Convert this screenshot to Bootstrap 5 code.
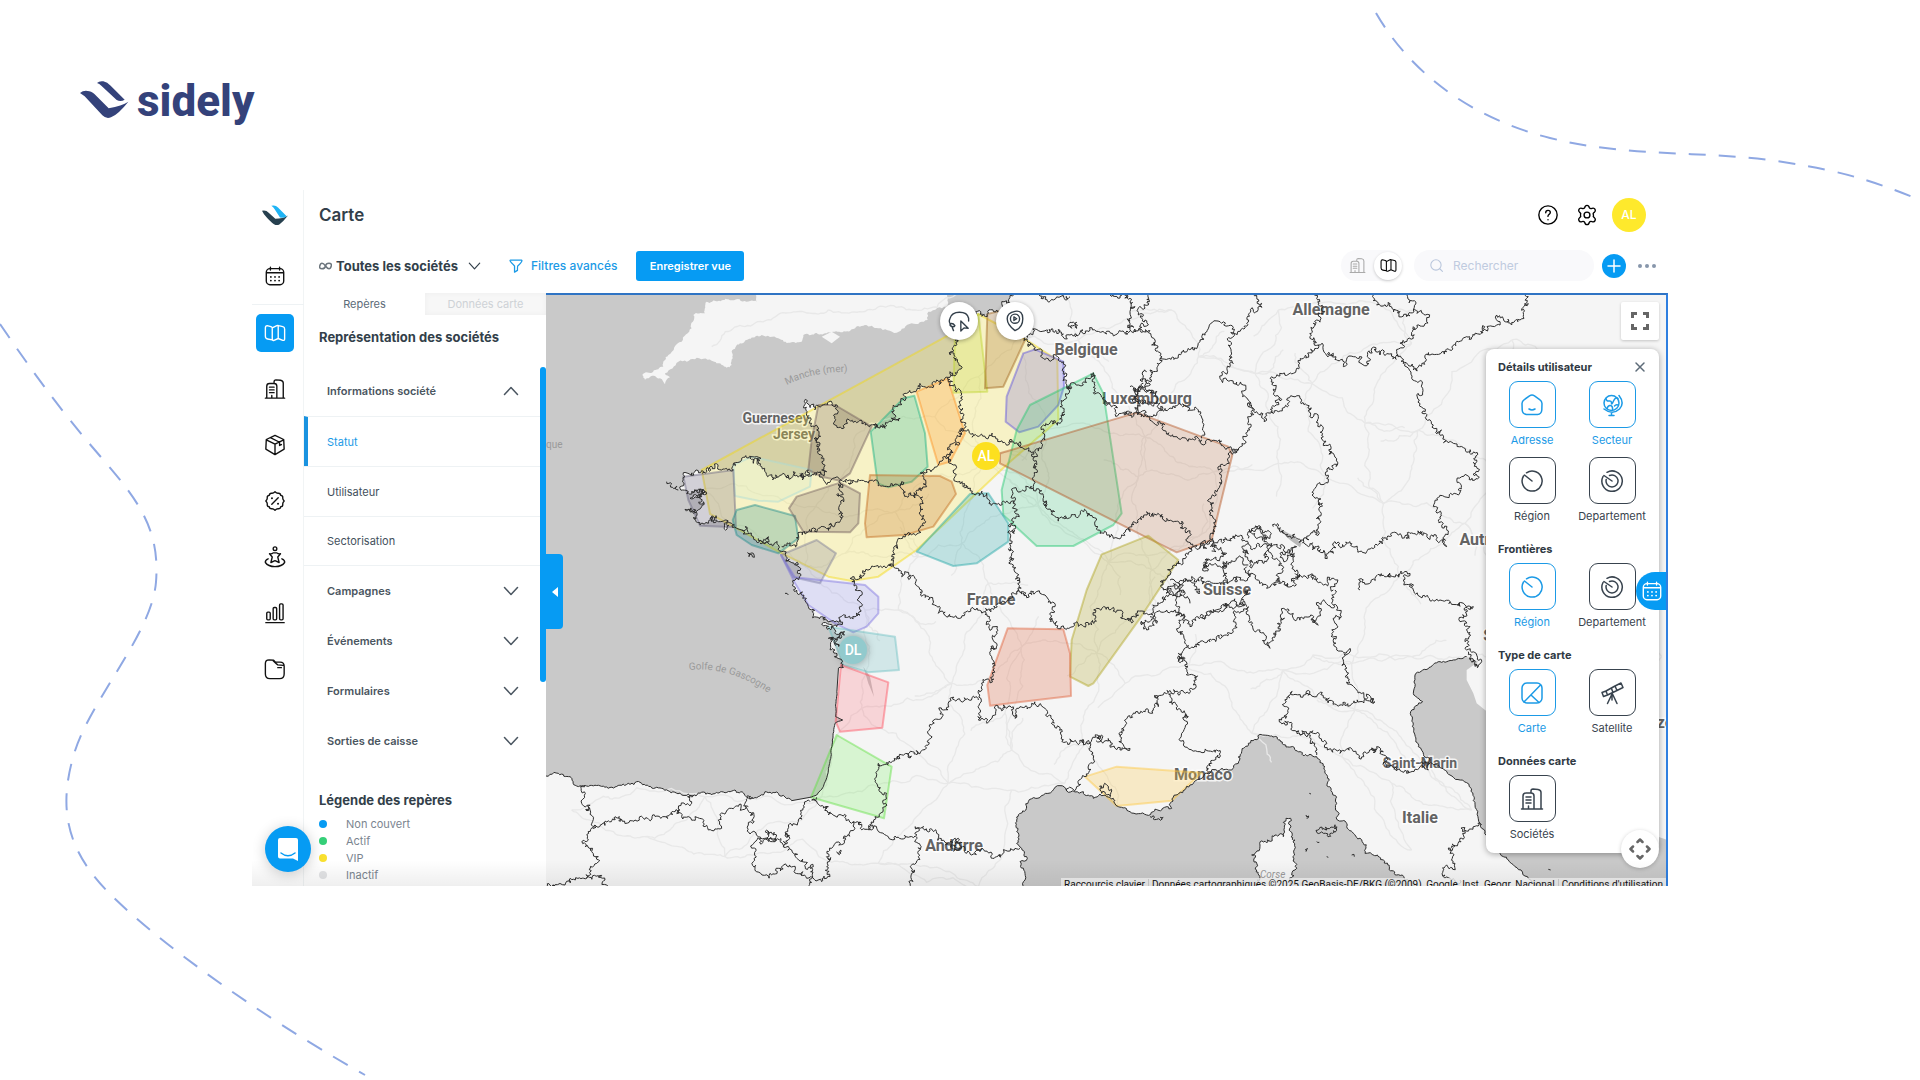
<!DOCTYPE html>
<html lang="fr">
<head>
<meta charset="utf-8">
<meta name="viewport" content="width=device-width, initial-scale=1">
<title>Sidely – Carte</title>
<link rel="stylesheet" href="https://cdn.jsdelivr.net/npm/bootstrap@5.3.0/dist/css/bootstrap.min.css">
<style>
:root{--blue:#069bf3;--ink:#333f4a;--line:#eef2f4}
body{font-family:Inter,"Liberation Sans",sans-serif;color:var(--ink);background:#fff;font-size:12px;line-height:16px;overflow-x:hidden}
svg.ico{fill:none;stroke:currentColor;stroke-width:1.5;stroke-linecap:round;stroke-linejoin:round;flex:none;display:block}
.deco{position:absolute;inset:0;width:100%;height:100%;z-index:-1;fill:none;stroke:#8fa8e3;stroke-width:2;stroke-dasharray:17 13}
.brand{padding:75px 80px 0;height:190px;color:#34427a;font-family:Roboto,"Liberation Sans",sans-serif;font-weight:800;font-size:44px;line-height:52px}
.brand svg{fill:#34427a;margin-top:4px}
.app{margin:0 252px;position:relative}
.rail{width:52px;padding-right:5px;border-right:1px solid #f1f4f5;color:#111}
.rail a{width:38px;height:38px;border-radius:5px;color:#111;margin-bottom:18px}
.rail a.on{background:var(--blue);color:#fff}
.rail a svg{width:22px;height:22px}
.rail .sep{height:1px;background:var(--line);width:52px;margin:-9px -5px 9px 0}
.rail .mark-s{height:50px;margin-bottom:17px}
.top-a{height:50px;padding:0 22px 0 15px}
.top-a h1{font-size:17px;line-height:24px;font-weight:600;margin:0}
.top-a .gap-x{gap:17px}
.avatar{width:34px;height:34px;border-radius:50%;background:#fee92c;color:#fff;font-weight:500;font-size:12px;margin-left:-3px}
.top-b{height:53px;padding:0 12px 2px 15px}
.pick{border:0;background:none;appearance:none;font-weight:700;font-size:13px;color:var(--ink);padding:0;width:148px}
.pick-arrow{margin-left:-16px;pointer-events:none}
.inf{stroke-width:3!important}
.btn-plain{border:0;background:none;padding:0;color:inherit}
.filt{color:#1b9ae6;font-weight:500;font-size:12px}
.save{background:var(--blue);color:#fff;font-weight:600;font-size:11px;border-radius:3px;border:0;height:30px;width:108px;margin-left:19px}
.pill{background:#f9f9fb;border-radius:16px;height:31px}
.pill .off{color:#aaa}
.pill .sel{width:28px;height:28px;border-radius:50%;background:#fff;box-shadow:0 1px 3px #0003}
.find{width:180px;color:#b9c6dc}
.find input{border:0;background:none;outline:0;width:120px;font-size:12px;color:var(--ink)}
.find input::placeholder{color:#c0cbdf;opacity:1}
.plus{width:24px;height:24px;border-radius:50%;background:var(--blue);color:#fff}
.side{width:242px;position:relative;z-index:2}
.tabs button{border:0;background:#fff;height:22px;flex:1;font-size:11px;color:#5c6b78}
.tabs button+button{background:#f7f7f7;color:#ced2d6;box-shadow:inset 0 0 6px #0000000a}
.side h2{font-size:13px;line-height:16px;font-weight:700;margin:0 0 0 15px}
.side .h-top{margin-top:14px;margin-bottom:21px}
.acc button{border:0;background:none;display:flex;width:100%;height:50px;align-items:center;justify-content:space-between;padding:0 27px 0 23px;font-size:11px;font-weight:600;color:#4a5560;text-align:left}
.acc .sub{border-top:1px solid var(--line);font-weight:400;color:#43505c}
.acc .last-sub{border-bottom:1px solid var(--line)}
.acc .cur{color:#1b9ae6;border-left:4px solid #1a93e0;padding-left:19px}
.scroller{position:absolute;right:0;top:74px;width:6px;height:315px;border-radius:3px;background:var(--blue)}
.legend{list-style:none;margin:7px 0 0;padding:0 0 3px 15px;color:#7b8590;font-size:11px}
.legend li{display:flex;align-items:center;height:17px;gap:19px}
.legend i{width:8px;height:8px;border-radius:50%}
.side .h-leg{margin-top:26px}
.map-box{position:relative;overflow:hidden;border-top:2px solid #2f74c4;border-right:2px solid #2f7fe0;background:#c9c9c9}
.map-box>svg{position:absolute;inset:0;width:100%;height:100%}
.map-box text{font-family:Roboto,"Liberation Sans",sans-serif}
.land{fill:#f5f5f5}
.road{fill:none;stroke:#e8e8e8;stroke-width:4}
.bord{fill:none;stroke:#2c2c2c;stroke-width:3;stroke-linejoin:round}
.zones polygon{stroke-width:6;stroke-linejoin:round;stroke-opacity:.45;fill-opacity:.25}
.lab{font-weight:700;font-size:16px;fill:#636363;stroke:#fff;stroke-opacity:.8;stroke-width:3px;paint-order:stroke;text-anchor:middle}
.lab.s14{font-size:14px}
.wat{font-size:10px;fill:#9a9a9a}
.over{position:absolute;border:0;padding:0;background:#fff;display:flex;align-items:center;justify-content:center;color:#333f4a}
.round{width:38px;height:38px;border-radius:50%;top:7px;box-shadow:0 1px 4px #0005}
.lasso{left:394px}.pin{left:450px}
.full{right:7px;top:7px;width:38px;height:38px;border-radius:2px;box-shadow:0 1px 3px #0003;color:#666}
.full svg{stroke-width:3!important;stroke-linecap:butt!important;stroke-linejoin:miter!important}
.pan{right:7px;bottom:18px;width:38px;height:38px;border-radius:50%;box-shadow:0 1px 4px #0003;color:#666;z-index:3}
.pan svg{stroke-width:2.5!important}
.cal{right:-2px;top:277px;width:32px;height:38px;border-radius:19px 0 0 19px;background:var(--blue);color:#fff;z-index:3}
.fold{left:0;top:259px;width:17px;height:75px;border-radius:0 4px 4px 0;background:var(--blue);color:#fff}
.panel{position:absolute;right:7px;top:54px;width:173px;background:#fff;border-radius:8px;box-shadow:0 1px 6px #0005;padding:11px 12px 12px}
.panel h3{font-size:11px;line-height:14px;font-weight:700;margin:0 0 7px;color:#2f3943}
.panel .tiles{display:grid;grid-template-columns:80px 80px;margin-left:-8px;margin-bottom:19px;row-gap:10px}
.panel .tiles.end{margin-bottom:0}
.tile{border:0;background:none;padding:0;color:#38434e;font-size:11px;line-height:14px;display:flex;flex-direction:column;align-items:center;gap:5px;width:80px;margin-left:2px}
.tile span{width:47px;height:47px;border:1px solid currentColor;border-radius:9px;display:flex;align-items:center;justify-content:center}
.tile.on{color:#1b9ae6}
.closer{position:absolute;right:13px;top:12px;color:#5d6b78}
.attr{position:absolute;right:0;bottom:-6px;background:#f5f5f5cc;font:10px/14px Roboto,"Liberation Sans",sans-serif;color:#111;white-space:nowrap;z-index:2}
.attr a{color:#111;text-decoration:none;padding:0 3px}
.attr a+a{border-left:1px solid #ccc}
.chat{position:absolute;left:13px;bottom:14px;width:46px;height:46px;border-radius:50%;border:0;background:var(--blue);box-shadow:0 2px 14px #0003;z-index:5;padding:0}
.shade{position:absolute;left:0;right:0;bottom:0;height:26px;background:linear-gradient(#0000,#00000010);pointer-events:none;z-index:4}
</style>
<script src="https://cdn.jsdelivr.net/npm/bootstrap@5.3.0/dist/js/bootstrap.bundle.min.js"></script>
</head>
<body class="position-relative min-vh-100">

<svg width="0" height="0" class="position-absolute" aria-hidden="true">
  <symbol id="calendar" viewBox="0 0 24 24"><rect x="2.500" y="4" width="19" height="17.500" rx="4"/><path d="M3 8.500h18M7 2.500v3M17 2.500v3"/><path stroke-width="2" d="M7.500 13h0M12 13h0M16.500 13h0M7.500 17h0M12 17h0M16.500 17h0"/></symbol>
  <symbol id="map" viewBox="0 0 24 24"><path d="M1.500 6.500q0-2.500 2-2.500l4 1 1.500 1v13.500l-5-1q-2.500-.5-2.500-3zM9 6.500l5-2.500q1-.5 2 0l4.500 1q2 .5 2 2.500v11q0 2-2 1.500L15.500 18 11 20q-1 .4-2-.5M15.500 4v14"/></symbol>
  <symbol id="building" viewBox="0 0 24 24"><path d="M1.500 22h21M3 22V9q0-3 3-3h5q3 0 3 3v13M11 6V4q0-2 2-2l5 .5q3 .5 3 3V22M6 10h5M6 13h5M6 16h5M8.500 22v-3"/></symbol>
  <symbol id="box" viewBox="0 0 24 24"><path d="M12 1.500 21.500 6 22 16.500 12 22.500 2 16.500 2.500 6zM2.500 6.500 12 11l9.500-4.500M12 11v11M7 4l10 5v3.500l2-1"/></symbol>
  <symbol id="percent" viewBox="0 0 24 24"><path d="M12 2q2 2 4 1.500 2 0 2.300 2.300Q20.500 6 20.500 8 20 10 22 12q-2 2-1.500 4 0 2-2.200 2.200Q18 20.500 16 20.500q-2-.5-4 1.500-2-2-4-1.500-2 0-2.300-2.300Q3.500 18 3.500 16 4 14 2 12q2-2 1.500-4 0-2 2.200-2.200Q6 3.500 8 3.500 10 4 12 2zM8.500 15.500l7-7"/><path stroke-width="2.200" d="M8.700 9h0M15.300 15h0"/></symbol>
  <symbol id="person" viewBox="0 0 24 24"><circle cx="12" cy="3" r="2"/><path d="M6 8.500q2.500.5 4-1h4q1.500 1.500 4 1M18 8.500 15 12l1.500 6-4.500-2-4.500 2L9 12 6 8.500M4.500 14Q1 15.500 1.500 18q3 4.500 10.500 4.500T22.500 18q.5-2.500-3-4"/></symbol>
  <symbol id="bars" viewBox="0 0 24 24"><path d="M2 22.500h20"/><rect x="3" y="11" width="3.800" height="8.500" rx="1.200"/><rect x="10" y="6" width="3.800" height="13.500" rx="1.200"/><rect x="17" y="2" width="3.800" height="17.500" rx="1.200"/></symbol>
  <symbol id="folder" viewBox="0 0 24 24"><path d="M1.500 6q0-4 4-4l5 .5 2 2h5q4.500 0 4.500 4.500v8.500q0 5-5 5H6.500q-5 0-5-5zM10 3q3 3 5 4.500l6 .5M15 10.500h4"/></symbol>
  <symbol id="down" viewBox="0 0 16 10"><path d="m1.500 1.500 6.500 7 6.500-7"/></symbol>
  <symbol id="up" viewBox="0 0 16 10"><path d="m1.500 8.500 6.500-7 6.500 7"/></symbol>
  <symbol id="dial" viewBox="0 0 24 24"><path d="M6.500 3.800A10 10 0 1 1 3.500 7M4.500 6l7.500 6"/></symbol>
  <symbol id="radar" viewBox="0 0 24 24"><path d="M7 3.300A10.200 10.200 0 1 1 3 7.500M9.500 6.500a6 6 0 1 1-3.300 4M4 6.500l8 5.500"/></symbol>
  <symbol id="home" viewBox="0 0 24 24"><path d="m9.500 2.800-5.500 4Q2.200 8 2 10.500L2.200 17q.3 4 4.300 4.500h11q4-.5 4.300-4.500l.2-6.500q-.2-2.500-2-3.700l-5.500-4q-2.500-1.600-5 0zM9 16q3 1.800 6 0"/></symbol>
  <symbol id="globe" viewBox="0 0 24 24"><circle cx="11.500" cy="10" r="7.500"/><path d="M19 2.500q6 7.500.5 13.500-7 6.500-15.500 0M11.500 20v2.500M9 22.500h5M6 5.500q.5 3 3 2.500t2.500 2 2-2 4.500-2.500M7 15.500q1-3.500 3.500-3t2 4.500M14.500 13q1.500-2 3.500-1"/></symbol>
  <symbol id="flat" viewBox="0 0 24 24"><rect x="2" y="2" width="20" height="20" rx="5"/><path d="M4 21 20.500 4M11 14l8 7.500"/></symbol>
  <symbol id="scope" viewBox="0 0 24 24"><path d="m2 11.500 4-1.500 1.500 4-4 1.500zM6 10l9-5 2 4.500-9.500 4.500M15 5l6-3 2 4.500-6 3M11.500 7.500l1.500 4M12 13l-4.500 9.500M12.500 13l4.500 9.500M12 13v6"/></symbol>
  <symbol id="gear" viewBox="0 0 24 24"><circle cx="12" cy="12" r="3.200"/><path d="M9.500 4Q10 1.500 12 1.500T14.500 4q1 1.500 3 .8 2.300-.8 3.300 1t-.9 3.400q-1.800 1-.8 2.800-.9 1.800.8 2.800 1.900 1.600.9 3.400t-3.300 1q-2-.7-3 .8Q14 22.500 12 22.500T9.500 20q-1-1.500-3-.8-2.300.8-3.300-1t.9-3.400q1.700-1 .8-2.800.9-1.800-.8-2.800-1.900-1.600-.9-3.400t3.300-1q2 .7 3-.8z"/></symbol>
</svg>

<svg class="deco" viewBox="0 0 1920 1080" preserveAspectRatio="xMidYMid slice" aria-hidden="true">
  <path d="M1376 13C1410 72 1470 118 1550 138S1700 150 1776 161 1880 184 1930 204"/>
  <path d="M0 324C30 368 60 410 100 456S160 530 156 582 90 700 74 754 66 850 110 894 250 1010 365 1075"/>
</svg>

<header class="brand d-flex">
  <svg width="49" height="40" viewBox="0 0 147 120" aria-hidden="true"><path d="M0 42q12-10 28-5 10 2 22 15l36 36q40-8 59-20-30 38-52 47-14 6-26-6L14 52zM51 12Q58 5 70 7q12 2 22 13l42 42q-12 8-24 1L64 20q-6-6-13-8z"/></svg>
  <span class="ms-2">sidely</span>
</header>

<main class="app d-flex">
  <nav class="rail d-flex flex-column align-items-center" aria-label="Navigation">
    <div class="mark-s d-flex align-items-center"><svg width="26" height="21" viewBox="0 0 78 62" aria-hidden="true"><path fill="#27404f" d="M0 17q12-3 20 6l20 18q22 0 38-10-14 18-26 27-8 4-16-1-12-8-30-30z"/><path fill="#1fb4f5" d="M28 2q12-4 20 5l26 26q-8 6-20 4L38 12q-4-6-10-10z"/></svg></div>
    <a href="#" class="d-flex align-items-center justify-content-center" aria-label="Agenda"><svg class="ico"><use href="#calendar"/></svg></a>
    <div class="sep"></div>
    <a href="#" class="on d-flex align-items-center justify-content-center" aria-label="Carte"><svg class="ico"><use href="#map"/></svg></a>
    <a href="#" class="d-flex align-items-center justify-content-center" aria-label="Sociétés"><svg class="ico"><use href="#building"/></svg></a>
    <a href="#" class="d-flex align-items-center justify-content-center" aria-label="Produits"><svg class="ico"><use href="#box"/></svg></a>
    <a href="#" class="d-flex align-items-center justify-content-center" aria-label="Promotions"><svg class="ico"><use href="#percent"/></svg></a>
    <a href="#" class="d-flex align-items-center justify-content-center" aria-label="Équipe"><svg class="ico"><use href="#person"/></svg></a>
    <a href="#" class="d-flex align-items-center justify-content-center" aria-label="Statistiques"><svg class="ico"><use href="#bars"/></svg></a>
    <a href="#" class="d-flex align-items-center justify-content-center" aria-label="Documents"><svg class="ico"><use href="#folder"/></svg></a>
  </nav>

  <div class="flex-grow-1 d-flex flex-column">
    <div class="top-a d-flex align-items-center justify-content-between">
      <h1>Carte</h1>
      <div class="gap-x d-flex align-items-center">
        <button class="btn-plain text-black" aria-label="Aide"><svg class="ico" width="22" height="22" viewBox="0 0 24 24"><circle cx="12" cy="12" r="10"/><path d="M9.500 9.500Q9.500 7 12 7t2.500 2.300q0 1.200-1.300 2T12 13.500M12 17v.3"/></svg></button>
        <button class="btn-plain text-black" aria-label="Paramètres"><svg class="ico" width="22" height="22"><use href="#gear"/></svg></button>
        <div class="avatar d-flex align-items-center justify-content-center">AL</div>
      </div>
    </div>
    <div class="top-b d-flex align-items-center justify-content-between">
      <div class="d-flex align-items-center">
        <svg class="ico inf me-1 text-secondary" width="13" height="8" viewBox="0 0 26 14"><path d="M13 7Q9 1.500 6 1.500T1.500 7 6 12.500 13 7t7-5.500T24.500 7 20 12.500 13 7z"/></svg>
        <select class="pick" aria-label="Vue"><option>Toutes les sociétés</option></select>
        <svg class="ico pick-arrow" width="13" height="8"><use href="#down"/></svg>
        <button class="btn-plain filt d-flex align-items-center ms-4"><svg class="ico ms-1 me-2" width="14" height="14" viewBox="0 0 24 24"><path stroke-width="2.200" d="M2.500 2h19q1 0 .5 1.500-.5 2-7 8.500-.5.500-.5 7.500L9.500 22.500V12Q3 5.500 2 3.500 1.500 2 2.500 2z"/></svg>Filtres avancés</button>
        <button class="save p-0">Enregistrer vue</button>
      </div>
      <div class="d-flex align-items-center">
        <div class="pill d-flex align-items-center ps-2 gap-2 me-2">
          <button class="btn-plain off" aria-label="Liste"><svg class="ico" width="17" height="17"><use href="#building"/></svg></button>
          <button class="btn-plain sel d-flex align-items-center justify-content-center text-black" aria-label="Carte"><svg class="ico" width="17" height="17"><use href="#map"/></svg></button>
        </div>
        <div class="pill find d-flex align-items-center gap-2 ms-1 me-2 ps-3">
          <svg class="ico" width="13" height="13" viewBox="0 0 24 24"><circle cx="11" cy="11" r="9.500" stroke-width="2"/><path stroke-width="2" d="m18 18 5 5"/></svg>
          <input type="search" aria-label="Rechercher" placeholder="Rechercher">
        </div>
        <button class="btn-plain plus d-flex align-items-center justify-content-center" aria-label="Ajouter"><svg class="ico" width="14" height="14" viewBox="0 0 14 14"><path d="M7 1v12M1 7h12"/></svg></button>
        <button class="btn-plain ms-2 ps-1" aria-label="Plus"><svg class="d-block" width="18" height="4" viewBox="0 0 18 4" fill="#8796ab"><circle cx="2" cy="2" r="2"/><circle cx="9" cy="2" r="2"/><circle cx="16" cy="2" r="2"/></svg></button>
      </div>
    </div>

    <div class="d-flex flex-grow-1">
      <section class="side">
        <div class="tabs d-flex"><button>Repères</button><button>Données carte</button></div>
        <h2 class="h-top">Représentation des sociétés</h2>
        <div class="acc">
          <button>Informations société<svg class="ico" width="16" height="10"><use href="#up"/></svg></button>
          <button class="sub cur">Statut</button>
          <button class="sub">Utilisateur</button>
          <button class="sub last-sub">Sectorisation</button>
          <button>Campagnes<svg class="ico" width="16" height="10"><use href="#down"/></svg></button>
          <button>Événements<svg class="ico" width="16" height="10"><use href="#down"/></svg></button>
          <button>Formulaires<svg class="ico" width="16" height="10"><use href="#down"/></svg></button>
          <button>Sorties de caisse<svg class="ico" width="16" height="10"><use href="#down"/></svg></button>
        </div>
        <h2 class="h-leg">Légende des repères</h2>
        <ul class="legend">
          <li><i style="background:#069bf3"></i>Non couvert</li>
          <li><i style="background:#35cf78"></i>Actif</li>
          <li><i style="background:#f9e02f"></i>VIP</li>
          <li><i style="background:#e2e3e5"></i>Inactif</li>
        </ul>
        <div class="scroller"></div>
      </section>

      <section class="map-box flex-grow-1" aria-label="Carte">
        <svg viewBox="546 295 1120 591" preserveAspectRatio="xMidYMid slice">
          <g id="base" transform="translate(545 290) scale(.33333)"></g>
          <g>
            <text class="lab" x="1331" y="315">Allemagne</text>
            <text class="lab" x="1086" y="355">Belgique</text>
            <text class="lab" x="1147" y="404">Luxembourg</text>
            <text class="lab s14" x="776" y="423">Guernesey</text>
            <text class="lab s14" x="794" y="439">Jersey</text>
            <text class="lab" x="991" y="605">France</text>
            <text class="lab" x="1227" y="595">Suisse</text>
            <text class="lab" x="1490" y="545">Autriche</text>
            <text class="lab" x="1514" y="641">Slovénie</text>
            <text class="lab" x="1203" y="780">Monaco</text>
            <text class="lab" x="954" y="851">Andorre</text>
            <text class="lab" x="1420" y="823">Italie</text>
            <text class="lab s14" x="1420" y="768">Saint-Marin</text>
            <text class="lab" x="1665" y="728">ze</text>
            <text class="wat" x="546" y="448">que</text>
            <text class="wat" x="1260" y="878" font-style="italic">Corse</text>
            <path id="arc1" fill="none" d="M787 385Q815 370 860 372"/>
            <path id="arc2" fill="none" d="M689 670Q742 665 792 712"/>
            <text class="wat"><textPath href="#arc1">Manche (mer)</textPath></text>
            <text class="wat"><textPath href="#arc2">Golfe de Gascogne</textPath></text>
          </g>
          <g class="zones" transform="translate(545 290) scale(.33333)">
            <polygon fill="#ffeb3b" stroke="#f5d90a" fill-opacity=".24" points="470,540 1230,125 1300,72 1445,150 1537,210 1540,390 1390,520 1115,780 1000,860 920,873 850,860 760,815 700,785 575,715 495,672"/>
            <polygon fill="#cfeacb" stroke="#a9dcd8" points="565,525 620,500 800,540 795,590 700,635 640,632 570,618"/>
            <polygon fill="#6b6580" stroke="#6b6580" points="415,560 565,540 573,712 465,707 430,630"/>
            <polygon fill="#1c8c8c" stroke="#1c8c8c" points="630,645 750,678 760,745 700,790 620,765 575,735 563,690 575,660"/>
            <polygon fill="#6e5a5a" stroke="#6e5a5a" points="820,345 870,345 980,410 915,550 885,572 830,560 790,540 800,450"/>
            <polygon fill="#6e5a5a" stroke="#6e5a5a" points="885,578 945,610 940,700 915,727 775,725 732,655 755,620"/>
            <polygon fill="#14b8a0" stroke="#14b080" points="1075,325 1108,317 1140,430 1148,530 1100,575 1030,592 998,580 977,425"/>
            <polygon fill="#ff9020" stroke="#ff9020" points="1115,305 1208,265 1260,430 1215,515 1180,525"/>
            <polygon fill="#c46a1c" stroke="#c46a1c" points="975,555 1185,558 1220,575 1233,612 1165,710 1080,735 965,742 960,700"/>
            <polygon fill="#7d7d96" stroke="#7d7d96" points="708,795 815,750 873,790 825,880 745,862"/>
            <polygon fill="#8080f0" stroke="#7a6fe0" style="fill-opacity:.2" points="708,795 750,862 960,885 1000,920 1000,970 965,1010 925,1027 870,1000 790,945 750,880"/>
            <polygon fill="#6cc0c4" stroke="#6cc0c4" points="850,1010 1050,1040 1062,1140 970,1147 895,1125"/>
            <polygon fill="#ff5060" stroke="#ff5060" style="fill-opacity:.2" points="888,1125 1030,1177 1012,1313 885,1325 872,1295"/>
            <polygon fill="#60f040" stroke="#60e040" style="fill-opacity:.2" points="875,1335 1040,1430 1017,1585 798,1522"/>
            <polygon fill="#bfd52e" stroke="#bfd52e" points="1230,125 1300,72 1327,305 1225,308"/>
            <polygon fill="#a0641c" stroke="#a0641c" points="1327,72 1375,60 1440,150 1375,290 1320,295"/>
            <polygon fill="#6f63dd" stroke="#5a4fe0" points="1435,190 1470,178 1555,215 1557,290 1540,345 1480,410 1423,427 1382,395 1385,320"/>
            <polygon fill="#22c76e" stroke="#22c76e" style="fill-opacity:.2" points="1645,250 1675,310 1730,670 1705,705 1585,768 1475,768 1375,675 1370,600 1415,420 1455,345"/>
            <polygon fill="#b4511e" stroke="#b4511e" style="fill-opacity:.18" points="1365,490 1775,368 2050,470 2062,495 2000,750 1895,787 1800,740 1365,520"/>
            <polygon fill="#20a6a6" stroke="#20a6a6" points="1115,785 1275,612 1330,610 1390,700 1390,755 1295,820 1225,828"/>
            <polygon fill="#afa520" stroke="#afa520" points="1670,793 1810,737 1900,810 1785,985 1645,1180 1630,1188 1575,1160 1580,1050 1625,900"/>
            <polygon fill="#e06038" stroke="#e06038" points="1388,1015 1555,1018 1575,1090 1578,1218 1335,1247 1327,1185"/>
            <polygon fill="#ffc83d" stroke="#ffc83d" points="1620,1460 1715,1430 1970,1448 1880,1532 1715,1548"/>
          </g>
          <g id="lines" transform="translate(545 290) scale(.33333)"></g>
          <g fill="#fff" font-size="14" font-weight="500" text-anchor="middle">
            <circle cx="986" cy="456" r="14" fill="#fce01f"/><text x="986" y="461">AL</text>
            <circle cx="853" cy="650" r="14" fill="#92cacd" style="filter:drop-shadow(0 0 4px #0005)"/><text x="853" y="655">DL</text>
          </g>
        </svg>

        <button class="over round lasso" aria-label="Lasso"><svg class="ico" width="22" height="22" viewBox="0 0 24 24"><path d="M3 15.500Q.5 13.500 2 9.500 4 2.500 12.500 2.500T22.500 9v3M14 12l8 8-4.500-.5L14 23zM2.500 15q3-1 5 2-1 2-3.500 1t-1.500-3zM4 17.500l2 5"/></svg></button>
        <button class="over round pin" aria-label="Repère"><svg class="ico" width="22" height="22" viewBox="0 0 24 24"><path d="M12 22.500Q3.500 16 3.500 9.500T12 1.500t8.500 8T12 22.500z"/><circle cx="12" cy="9.500" r="5"/><path d="M10.800 7.500v4l3-2z"/></svg></button>
        <button class="over full" aria-label="Plein écran"><svg class="ico" width="18" height="18" viewBox="0 0 18 18"><path d="M1.500 6V1.500H6M12 1.500h4.500V6M16.500 12v4.500H12M6 16.500H1.500V12"/></svg></button>
        <button class="over fold" aria-label="Replier"><svg width="6" height="10" viewBox="0 0 6 10" fill="#fff"><path d="M6 0v10L0 5z"/></svg></button>

        <aside class="panel">
          <button class="btn-plain closer" aria-label="Fermer"><svg class="ico" width="12" height="12" viewBox="0 0 12 12"><path d="m2 2 8 8M10 2l-8 8"/></svg></button>
          <h3>Détails utilisateur</h3>
          <div class="tiles">
            <button class="tile on"><span><svg class="ico" width="24" height="24"><use href="#home"/></svg></span>Adresse</button>
            <button class="tile on"><span><svg class="ico" width="24" height="24"><use href="#globe"/></svg></span>Secteur</button>
            <button class="tile"><span><svg class="ico" width="24" height="24"><use href="#dial"/></svg></span>Région</button>
            <button class="tile"><span><svg class="ico" width="24" height="24"><use href="#radar"/></svg></span>Departement</button>
          </div>
          <h3>Frontières</h3>
          <div class="tiles">
            <button class="tile on"><span><svg class="ico" width="24" height="24"><use href="#dial"/></svg></span>Région</button>
            <button class="tile"><span><svg class="ico" width="24" height="24"><use href="#radar"/></svg></span>Departement</button>
          </div>
          <h3>Type de carte</h3>
          <div class="tiles">
            <button class="tile on"><span><svg class="ico" width="24" height="24"><use href="#flat"/></svg></span>Carte</button>
            <button class="tile"><span><svg class="ico" width="24" height="24"><use href="#scope"/></svg></span>Satellite</button>
          </div>
          <h3>Données carte</h3>
          <div class="tiles end">
            <button class="tile"><span><svg class="ico" width="24" height="24"><use href="#building"/></svg></span>Sociétés</button>
          </div>
        </aside>
        <button class="over cal" aria-label="Agenda"><svg class="ico" width="22" height="22"><use href="#calendar"/></svg></button>
        <button class="over pan" aria-label="Déplacer"><svg class="ico" width="22" height="22" viewBox="0 0 22 22"><path d="M8.500 4 11 1.500 13.500 4M8.500 18l2.500 2.500 2.500-2.500M4 8.500 1.500 11 4 13.500M18 8.500l2.500 2.500-2.500 2.500"/></svg></button>
        <div class="attr"><a href="#">Raccourcis clavier</a><a href="#">Données cartographiques ©2025 GeoBasis-DE/BKG (©2009), Google, Inst. Geogr. Nacional</a><a href="#">Conditions d'utilisation</a></div>
      </section>
    </div>
  </div>
  <div class="shade"></div>
  <button class="chat" aria-label="Messagerie"><svg width="46" height="46" viewBox="0 0 46 46" aria-hidden="true"><path fill="#fff" d="M15 12h16q2 0 2 2v21l-5-2.500H15q-2 0-2-2V14q0-2 2-2z"/><path fill="none" stroke="#069bf3" stroke-width="1.500" stroke-linecap="round" d="M16 27q7 5.500 14 0"/></svg></button>
</main>

<script>
// Map geometry: coarse outlines, made ragged by midpoint displacement.
const NS = 'http://www.w3.org/2000/svg';
const base = document.getElementById('base'), lines = document.getElementById('lines');
const parse = (s, ox = 0, oy = 0) => s.trim().split(/\s+/).map(p => { const a = p.split(',').map(Number); return [a[0] + ox, a[1] + oy]; });
const noise = (x, y) => { const v = Math.sin(x * 12.9898 + y * 78.233) * 43758.5453; return (v - Math.floor(v)) * 2 - 1; };
// Short pieces are bent more than long ones, so lines keep their course but look jagged.
function split(a, b, k, out) {
  const dx = b[0] - a[0], dy = b[1] - a[1], d = Math.hypot(dx, dy);
  if (d < 8) { out.push(b); return; }
  const n = noise(a[0] + b[0], a[1] + b[1]) * k * Math.min(1.7, 26 / d);
  const m = [(a[0] + b[0]) / 2 - dy * n, (a[1] + b[1]) / 2 + dx * n];
  split(a, m, k, out); split(m, b, k, out);
}
function rough(pts, k) { const out = [pts[0]]; for (let i = 1; i < pts.length; i++) split(pts[i - 1], pts[i], k, out); return out; }
function draw(parent, cls, pts, fill) {
  const p = document.createElementNS(NS, 'path');
  p.setAttribute('d', 'M' + pts.map(q => q[0].toFixed(1) + ' ' + q[1].toFixed(1)).join('L'));
  p.setAttribute('class', cls); if (fill) p.setAttribute('fill', fill);
  parent.appendChild(p);
}
// England and the Isle of Wight
draw(base, 'land', rough(parse('637,0 637,35 550,28 485,35 480,70 445,75 440,115 410,155 370,195 355,230 292,255 300,270 330,258 345,265 360,283 375,262 360,250 400,215 450,208 500,212 530,225 545,233 560,225 560,185 585,160 650,135 700,145 735,158 770,155 775,135 845,130 920,118 960,105 1000,115 1055,128 1100,100 1148,90 1150,65 1205,50 1205,0'), .15));
draw(base, 'land', parse('830,140 860,125 885,140 860,160'));
// Continent
const west = rough(parse('1420,8 1385,40 1355,60 1295,72 1235,110 1230,150 1227,195 1243,238 1215,245 1208,262 1150,290 1080,310 1045,345 1040,385 1065,385 1020,415 990,415 960,405 900,402 870,405 862,340 820,348 778,335 785,370 800,400 815,420 822,470 830,540 845,545 790,540 770,550 745,545 710,555 683,570 660,545 640,515 620,500 590,510 565,520 565,540 530,540 510,528 470,542 420,560 413,600 440,605 480,605 470,620 435,625 475,635 470,650 420,658 445,670 465,705 490,700 495,685 520,695 560,700 575,715 590,720 625,740 650,755 700,765 710,785 735,815 765,850 745,880 755,900 790,950 830,980 865,992 885,990 875,1010 830,1002 870,1020 888,1045 882,1070 850,1045 870,1080 868,1100 893,1115 880,1140'), .45)
  .concat(rough(parse('876,1200 872,1280 893,1290 870,1300 862,1350 858,1400 850,1440 843,1470 835,1490 815,1515 795,1522'), .05))
  .concat(rough(parse('740,1532 700,1510 660,1505 625,1525 570,1500 530,1505 500,1515 430,1512 350,1495 275,1475 255,1483 95,1488 75,1460 40,1450 -10,1460'), .2));
draw(base, 'land', west.concat([[-10, 1820], [3450, 1820], [3450, 0]]));
// Mediterranean and Adriatic
const med = rough(parse('1435,1800 1440,1750 1425,1715 1447,1705 1430,1675 1415,1660 1415,1590 1450,1535 1495,1515 1545,1487 1565,1503 1615,1505 1645,1525 1665,1512 1705,1525 1720,1550 1755,1565 1805,1575 1825,1565 1880,1555 1875,1540 1935,1485 1980,1450 2055,1440 2080,1420 2090,1385 2110,1360 2145,1333 2205,1350 2265,1385 2315,1400 2340,1430 2350,1490 2375,1540 2377,1590 2405,1600 2425,1630 2455,1660 2460,1690 2515,1710 2555,1755 2625,1800'), .22);
draw(base, '', med, '#c9c9c9');
const adri = rough(parse('2995,1800 2910,1730 2865,1690 2823,1635 2805,1600 2773,1490 2765,1478 2715,1455 2655,1415 2620,1370 2602,1310 2597,1265 2633,1235 2605,1210 2610,1155 2685,1115 2765,1100'), .15);
draw(base, '', adri.concat(parse('2800,1115 2765,1140 2765,1170 2785,1210 2795,1240 2820,1260 3340,1640 3420,1670 3420,1800')), '#c9c9c9');
const corse = rough(parse('2140,1800 2135,1740 2120,1695 2145,1665 2190,1635 2215,1640 2223,1585 2237,1585 2237,1625 2250,1650 2250,1740 2235,1770 2230,1800'), .3);
draw(base, 'land', corse);
// Roads between towns
const T = { par:[1325,510], lyo:[1655,1090], tou:[1210,1480], bor:[950,1255], ren:[812,650], lem:[1050,665], orl:[1250,760], toi:[1120,800], poi:[1060,960], lim:[1220,1180], cle:[1430,1070], dij:[1690,820], nan:[1780,560], str:[2005,545], rei:[1500,430], lil:[1420,140], bru:[1600,150], col:[1880,60], fra:[2130,250], stu:[2200,520], mun:[2515,640], nur:[2460,400], mil:[2215,1140], trn:[1925,1130], gen:[2120,1330], bol:[2430,1260], flo:[2390,1400], rom:[2600,1680], zar:[540,1700], mad:[300,1640], bil:[480,1520], pam:[640,1620], bay:[830,1520], mar:[1720,1545], mon:[1560,1480], gre:[1740,1180], gev:[1830,960], bes:[1820,840], nts:[780,830], ang:[900,790], cae:[930,440], rou:[1170,380], ami:[1300,260], bre:[470,600], lor:[620,720], niort:[960,960], leo:[80,1560], top:[1240,8], lon:[1100,60], exe:[600,110], ply:[500,170], bri:[850,60], cob:[1960,200], met:[1800,440], tro:[1480,640], bou:[1330,880], ava:[1620,1360], mul:[1960,740], inn:[2560,860], ver:[2420,1120], ven:[2600,1100], ulm:[2340,560], wur:[2300,280], pra:[2900,150], reg:[2620,420], lin:[2840,520], sal:[2760,700], pes:[2780,1560], per:[2540,1480], kas:[2200,60], bay2:[2600,160], nar:[1400,1500], per2:[1370,1700], lle:[1000,1720], bar:[1300,1790], bru2:[1560,20], hal:[2500,40], aur:[1380,1270], rod:[1400,1380], gra:[2990,900], zag:[3350,1100], tri:[2860,1100] };
const J = 'par-rou par-ami par-rei par-orl par-lem par-tro rou-cae rou-ami ami-lil lil-bru lil-rei bru-col bru-met rei-met met-nan met-str met-cob cob-col cob-fra nan-str nan-dij tro-dij tro-rei tro-orl dij-lyo dij-bes bes-mul mul-str str-stu stu-ulm ulm-mun mun-nur nur-wur wur-fra fra-stu fra-kas nur-reg reg-mun reg-lin lin-sal sal-mun mun-inn inn-ver ver-mil ver-ven ver-bol bol-mil bol-flo flo-rom flo-gen gen-mil mil-trn trn-gen trn-gre gre-lyo lyo-gev lyo-cle lyo-ava ava-mar ava-mon mon-nar nar-tou tou-bor tou-lim lim-poi poi-toi toi-orl toi-lem toi-ang ang-nts ang-lem lem-ren ren-nts ren-cae ren-bre bre-lor lor-nts nts-niort niort-poi niort-bor bor-lim lim-bou bou-orl bou-cle cle-lim cle-aur aur-rod rod-tou rod-mon cle-rod bor-bay bay-bil bil-zar bay-pam pam-zar zar-mad mad-leo bil-mad zar-lle lle-bar bar-per2 per2-nar tou-bay lle-tou par-dij top-lon lon-bri bri-exe exe-ply gev-bes bru-bru2 nur-bay2 bay2-hal pra-reg wur-bay2 fra-cob kas-hal rom-per per-flo per-pes pes-bol ven-tri tri-gra gra-sal tri-zag bol-pes mil-ven bar-lle leo-bil ulm-wur inn-sal lin-pra mul-dij nan-bes';
// Roads bend over their whole length
function bend(a, b, k, out) {
  const dx = b[0] - a[0], dy = b[1] - a[1];
  if (Math.hypot(dx, dy) < 14) { out.push(b); return; }
  const n = noise(a[0] + b[0], a[1] + b[1]) * k, m = [(a[0] + b[0]) / 2 - dy * n, (a[1] + b[1]) / 2 + dx * n];
  bend(a, m, k, out); bend(m, b, k, out);
}
const road = (a, b, k) => { const o = [a]; bend(a, b, k, o); draw(base, 'road', o); };
J.split(' ').forEach(j => { const [a, b] = j.split('-'); road(T[a], T[b], .15); });
Object.values(T).forEach((t, i) => { if (t[0] > 950 && t[1] > 400 && t[1] < 1400 || t[0] > 1450 && t[1] < 1400) road(t, [t[0] + 120 * Math.cos(i * 2.4), t[1] + 100 * Math.sin(i * 2.4)], .2); });
draw(base, '', parse('2195,710 2240,735 2270,760 2265,772 2235,750'), '#b9b9b9');
draw(base, '', parse('955,1130 975,1160 987,1220 970,1180'), '#c4c4c4');
// Coasts and borders; each row: x offset, y offset, tracks
[west, med, adri, corse].forEach(c => draw(lines, 'bord', c));
const B = [
 [0,0,'1208,262 1245,300 1250,430 1215,470 1215,515 1135,545 1145,590 1115,615 1075,600 1070,575 1030,590 995,570 960,575 920,580 887,570 840,575 825,545|887,570 887,620 893,670 870,705 800,725 760,735 745,765 710,770|1115,615 1135,640 1130,690 1100,735 1060,745 1040,800 1030,825 960,850 915,865 930,900 948,940 945,975 885,990|1030,825 1070,860 1110,865 1130,900 1180,970 1260,970|365,575 380,582 400,600|608,788 625,790 628,802 612,800 608,788|640,745 670,740 665,755 645,760|720,910 730,915|590,720 600,710 610,728|495,685 500,678 515,690|440,605 470,598 485,612 455,615|620,500 625,520 632,505 640,525|765,550 772,570 775,550'],
 [1065,0,'375,130 385,170 410,180 430,205 490,215 500,290 550,285 580,248 582,300 610,330 665,370 740,375 780,395 825,440 905,450 960,460 1015,480|375,130 470,130 510,135 570,120 620,132 690,122|390,15 430,20 460,30 510,20|510,97 530,97 530,115 515,115 510,97|630,15 690,25 705,50 690,100 700,128 730,125 735,90 715,75 745,45 745,12|730,125 765,150 780,205 750,240 755,270 700,300 715,370|780,205 830,205 850,180 900,150 960,95 1003,130 985,165 1000,220 960,265 1000,280 1030,285 1045,350 1050,380 1035,440 1015,480 965,545 935,650 930,745|740,245 720,270 735,290 755,300 770,320 780,360 740,380 715,365 705,320 730,280|780,360 860,350 895,360 910,410 905,445|1003,130 1040,100 1060,60 1085,40 1060,12'],
 [1065,0,'185,435 230,437 300,455 360,455 405,500 400,595|155,480 165,560 215,610 260,610 280,640 340,640 350,600 400,595 430,640 465,680 560,665 590,690 600,730 640,745 690,725 700,695 740,665 800,685 860,715 880,770 920,775 930,745|500,290 480,350 480,400 430,405 435,450 405,500|340,640 358,680 330,730 335,790 350,850 350,905 300,940 255,965|790,900 790,870 830,820 880,770|790,900 850,870 885,880 900,910|690,290 715,330 745,345 770,335|720,305 760,310|820,880 850,900 870,940'],
 [1065,900,'190,70 255,65 285,110 290,160 275,200 280,255 235,310 235,390|350,5 420,10 465,50 465,105 520,110 530,95 575,105 590,55 630,60 700,95 740,70 790,20 840,0|235,390 270,390 310,345 345,385 360,350 395,340 440,360 460,390 485,440 520,455 560,455 580,505 555,560 530,590 500,603|560,455 600,450 660,480 690,475 660,440 680,400 720,370 775,350 765,315 815,310 880,285 880,255 835,190 860,165 840,110 845,90|815,310 830,345 865,380 845,430 850,465 900,485 950,480 935,520 925,545|590,440 605,435 600,455 588,452|235,330 150,325 130,360 95,405 85,450 50,495 0,505 -65,520 -75,575 -40,610 -45,650 -75,680 -80,715|840,5 830,40 870,110 890,80 1010,45 1040,50|750,80 770,100 740,120 725,105 770,65 800,60 840,70 850,100|600,600 625,595 620,615 605,610 600,600|45,740 45,710 110,730 145,765 195,775 215,795 240,785 290,800 360,775|50,740 55,800 35,900|150,755 175,745 185,770 155,775 150,755|1215,780 1222,775 1218,785|750,680 790,682'],
 [0,900,'815,622 800,630 850,650 850,675 925,695 960,718 985,715 1030,740 1110,738|925,695 905,740 860,775 845,830 855,860 830,875 785,865 750,840 700,835 680,855 630,835 630,755 690,755 740,780 805,830 790,890|625,625 600,640 625,685 610,705 640,740 690,755|795,635 760,690 735,700 730,750 715,770|445,615 440,640 400,655 360,680 270,690 210,680 150,705 135,660 110,640 120,590|400,655 410,680 450,680 490,720 530,715 520,690 560,655 610,650|150,705 120,770 160,800 125,865 180,870 190,890|0,880 60,885 125,865|660,725 695,735 690,750 665,745 660,725|875,785 888,780 878,790'],
 [1965,0,'145,350 170,365 200,390 235,365 260,330 300,325 320,345 355,380 370,440 400,490 400,535 380,565 345,595 360,650 358,730 310,750|220,370 232,330 215,260 280,250 310,205 355,165 330,140 350,90 370,50 340,12|355,165 400,190 430,230 460,200 500,215 515,175 540,195 595,200 600,160 640,145 640,110 680,90 640,60 620,12|520,15 530,45 620,80 640,60|595,200 640,240 690,195 740,185 800,140 900,95 890,75 960,90 985,20 990,0|615,220 635,265 668,295 658,330 700,405 760,460 830,510 835,545 825,570 785,560 775,600 700,650 730,700 740,770 700,740 630,730 500,785 450,755 405,755 400,790 375,805 350,770 310,750 290,745 220,710'],
 [1965,0,'30,745 80,750 130,745 145,760 220,765 290,770|145,760 135,800 150,820 200,815 215,760 180,710 145,725 145,745|290,770 280,830 285,880 240,880 200,895 150,860 140,830|70,820 70,880 130,870 150,840|0,775 40,760 80,790 60,805 15,810 20,835|240,790 270,780 280,800 250,810 240,790|205,765 240,850 240,880|285,850 330,855 370,885 395,865 400,900|480,900 490,870 560,860 630,850 610,870 640,900|160,715 200,725 210,745 165,740 160,715|10,820 70,815 130,810 145,825|30,770 50,768 48,785 35,783|-90,870 -50,885 -60,920 -100,910|-60,890 0,860 40,880 70,880'],
 [1965,900,'0,80 50,65 85,45 135,45 145,0|145,50 100,95 90,130 30,155 -35,165|145,50 145,95 180,120 210,175 240,110 250,55 280,85 330,80 355,105 360,70 350,45 375,35 400,45 420,75 405,100 410,180 450,175 430,210 435,260 470,300 525,335 480,335 420,345 350,320 330,305 270,315 260,350 245,390 275,405 300,435 350,495|400,45 405,0|300,435 340,430 370,455 420,490 500,490 530,470 560,500 560,530 620,550 660,530 690,520|640,0 660,20 720,30 820,50 780,95 810,110 795,155 800,180 830,195 845,215 835,225 805,185|845,705 780,745 750,790 765,820 735,830 735,855 780,870|355,720 400,712 398,730 370,730 355,720|660,520 675,515 690,520 685,540 665,530|318,675 326,678 320,685|350,755 358,757|380,800 385,802|455,795 463,800|328,610 333,612|1045,838 1052,840'] ];
B.forEach(([ox, oy, s]) => s.split('|').forEach(t => draw(lines, 'bord', rough(parse(t, ox, oy), .42))));
</script>
</body>
</html>
